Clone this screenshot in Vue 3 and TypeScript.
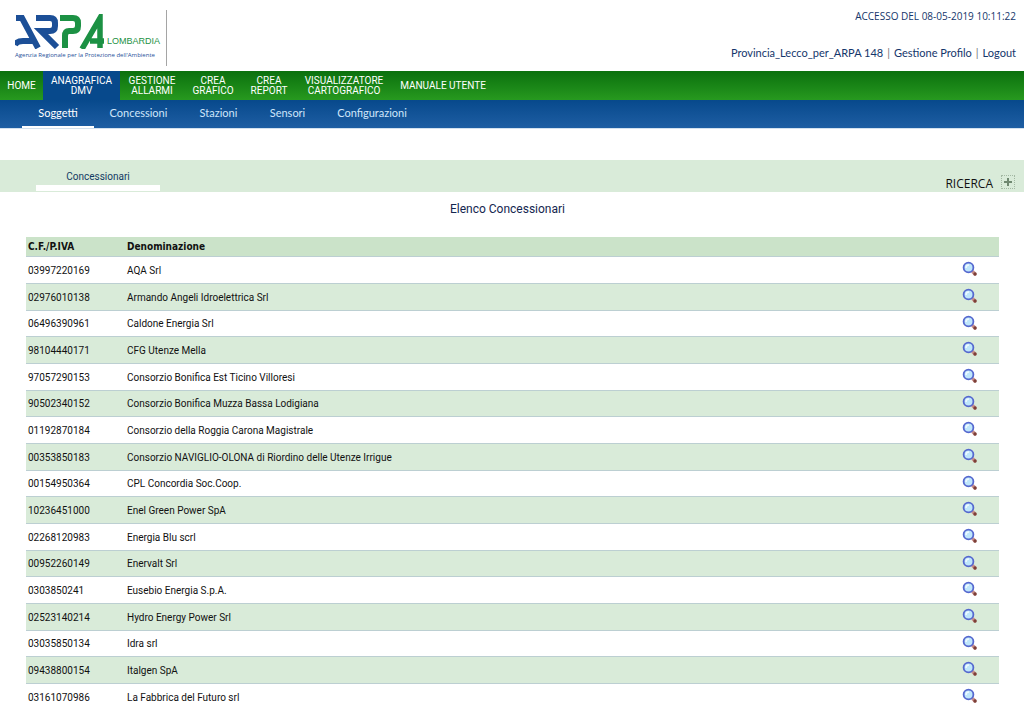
<script setup lang="ts">
interface Row {
  code: string
  name: string
}

const mainMenu: string[][] = [
  ['HOME'],
  ['ANAGRAFICA', 'DMV'],
  ['GESTIONE', 'ALLARMI'],
  ['CREA', 'GRAFICO'],
  ['CREA', 'REPORT'],
  ['VISUALIZZATORE', 'CARTOGRAFICO'],
  ['MANUALE UTENTE'],
]

const subMenu: string[] = ['Soggetti', 'Concessioni', 'Stazioni', 'Sensori', 'Configurazioni']

const rows: Row[] = [
  { code: '03997220169', name: 'AQA Srl' },
  { code: '02976010138', name: 'Armando Angeli Idroelettrica Srl' },
  { code: '06496390961', name: 'Caldone Energia Srl' },
  { code: '98104440171', name: 'CFG Utenze Mella' },
  { code: '97057290153', name: 'Consorzio Bonifica Est Ticino Villoresi' },
  { code: '90502340152', name: 'Consorzio Bonifica Muzza Bassa Lodigiana' },
  { code: '01192870184', name: 'Consorzio della Roggia Carona Magistrale' },
  { code: '00353850183', name: 'Consorzio NAVIGLIO-OLONA di Riordino delle Utenze Irrigue' },
  { code: '00154950364', name: 'CPL Concordia Soc.Coop.' },
  { code: '10236451000', name: 'Enel Green Power SpA' },
  { code: '02268120983', name: 'Energia Blu scrl' },
  { code: '00952260149', name: 'Enervalt Srl' },
  { code: '0303850241', name: 'Eusebio Energia S.p.A.' },
  { code: '02523140214', name: 'Hydro Energy Power Srl' },
  { code: '03035850134', name: 'Idra srl' },
  { code: '09438800154', name: 'Italgen SpA' },
  { code: '03161070986', name: 'La Fabbrica del Futuro srl' },
]
</script>

<template>
  <div class="page">
    <header class="header">
      <a class="brand" href="#" aria-label="ARPA Lombardia">
        <span class="brand-row">
          <svg class="mark" width="90" height="35" viewBox="0 0 90 35" aria-hidden="true">
            <g fill="none" stroke-width="6" stroke-linejoin="miter">
              <path stroke="#1c4f97" d="M1 4H7L23 34M0 31Q2 27 8 27H19" />
              <path stroke="#1c4f97" d="M21 4H35Q40 4 40 9V12Q40 17 35 17H26L42 33" />
              <path stroke="#1c9144" d="M50 34V22Q50 17 54 17H58Q63 17 63 12V9Q63 4 58 4H45" />
              <path stroke="#1c9144" stroke-width="5.500" d="M67 35L85 4V34M75 27H89" />
            </g>
          </svg>
          <span class="region">LOMBARDIA</span>
        </span>
        <span class="tagline">Agenzia Regionale per la Protezione dell'Ambiente</span>
      </a>
      <div class="session">
        <span class="access">ACCESSO DEL 08-05-2019 10:11:22</span>
        <div class="user">
          <span>Provincia_Lecco_per_ARPA 148</span><i>|</i><a href="#">Gestione Profilo</a><i>|</i><a href="#">Logout</a>
        </div>
      </div>
    </header>

    <nav class="main-nav" aria-label="Menu principale">
      <a v-for="(item, i) in mainMenu" :key="i" href="#" :class="{ active: i === 1 }">
        <span v-for="line in item" :key="line">{{ line }}</span>
      </a>
    </nav>
    <nav class="sub-nav" aria-label="Anagrafica">
      <a v-for="(item, i) in subMenu" :key="item" href="#" :class="{ active: i === 0 }">{{ item }}</a>
    </nav>

    <section class="band">
      <a class="tab" href="#">Concessionari</a>
      <div class="search">
        <label for="expand">RICERCA</label>
        <button id="expand" type="button" aria-label="Apri ricerca">
          <svg width="8" height="8" viewBox="0 0 8 8" aria-hidden="true"><path d="M0 4H8M4 0V8" stroke="#6f8870" stroke-width="2" /></svg>
        </button>
      </div>
    </section>

    <main>
      <h1>Elenco Concessionari</h1>
      <table>
        <colgroup><col class="c-code" /><col /><col class="c-action" /></colgroup>
        <thead>
          <tr><th scope="col">C.F./P.IVA</th><th scope="col">Denominazione</th><td></td></tr>
        </thead>
        <tbody>
          <tr v-for="row in rows" :key="row.code">
            <td>{{ row.code }}</td>
            <td>{{ row.name }}</td>
            <td>
              <button class="view" type="button" :aria-label="'Dettaglio ' + row.name">
                <svg width="16" height="16" viewBox="0 0 16 16" aria-hidden="true">
                  <path d="M9.500 9.500L11 11" stroke="#8a86b8" stroke-width="2" />
                  <path d="M11 11L13 13" stroke="#c98f8c" stroke-width="3.400" stroke-linecap="round" />
                  <circle cx="13" cy="13" r="1.700" fill="#7c4038" />
                  <circle cx="6.500" cy="6.500" r="4.900" fill="#bfe6fb" stroke="#5568cf" stroke-width="1.800" />
                  <path d="M4 7Q4 4 7 4" fill="none" stroke="#effaff" stroke-width="1.500" />
                </svg>
              </button>
            </td>
          </tr>
        </tbody>
      </table>
    </main>
  </div>
</template>

<style>
body {
  margin: 0;
  background: #fff;
}
</style>

<style scoped>
.page {
  font-family: Roboto, 'Noto Sans', sans-serif;
  font-size: 10px;
  color: #111;
}
a {
  color: inherit;
  text-decoration: none;
}
button {
  padding: 0;
  border: 0;
  background: none;
  cursor: pointer;
}
svg {
  display: block;
}
.header {
  display: flex;
  justify-content: space-between;
  height: 71px;
}
.brand {
  box-sizing: border-box;
  width: 167px;
  height: 56px;
  margin-top: 10px;
  padding: 4px 0 0 15px;
  border-right: 1px solid #a5a5a5;
  font-family: 'Liberation Sans', sans-serif;
}
.brand-row {
  display: flex;
  align-items: flex-end;
  gap: 2px;
}
.region {
  padding-bottom: 3px;
  color: #1c9144;
  font-size: 9px;
  line-height: 10px;
}
.tagline {
  display: block;
  padding-top: 2px;
  font-family: 'Open Sans', sans-serif;
  font-size: 6px;
  line-height: 8px;
  color: #1f529a;
  white-space: nowrap;
}
.session {
  display: flex;
  flex-direction: column;
  align-items: flex-end;
  gap: 21px;
  padding: 8px 8px 0 0;
  font-family: Lato, sans-serif;
  font-size: 11px;
  line-height: 16px;
  color: #14366b;
}
.access {
  font-family: 'Open Sans', sans-serif;
  font-size: 10px;
}
.user i {
  margin: 0 4px;
  font-style: normal;
  color: #777;
}
.main-nav {
  display: grid;
  grid-template-columns: 43px 77px 64px 58px 54px 96px 102px;
  height: 29px;
  background: linear-gradient(#0b700e, #27991f);
  font-size: 10px;
  line-height: 10px;
  color: #fff;
}
.main-nav a {
  display: flex;
  flex-direction: column;
  align-items: center;
  justify-content: center;
  white-space: nowrap;
}
.main-nav .active {
  background: #07498c;
}
.sub-nav {
  display: grid;
  grid-template-columns: 72px 89px 71px 67px 102px;
  height: 28px;
  padding-left: 22px;
  background: linear-gradient(#07498c, #1e5ea3);
  border-bottom: 1px solid #d3e1ee;
  font-family: Lato, sans-serif;
  font-size: 11px;
  line-height: 26px;
  color: #cfe6fa;
  text-align: center;
}
.sub-nav a {
  border-bottom: 2px solid transparent;
}
.sub-nav .active {
  color: #fff;
  border-bottom-color: #fff;
}
.band {
  display: flex;
  justify-content: space-between;
  height: 32px;
  margin-top: 31px;
  background: #d9ebd9;
}
.tab {
  box-sizing: border-box;
  width: 124px;
  height: 31px;
  margin-left: 36px;
  padding-top: 9px;
  border-bottom: 6px solid #fff;
  line-height: 16px;
  text-align: center;
  color: #123a63;
}
.search {
  display: flex;
  align-items: center;
  gap: 8px;
  height: 16px;
  margin: 16px 9px 0 0;
  font-family: 'Open Sans', sans-serif;
  font-size: 12px;
  line-height: 16px;
}
.search button {
  display: grid;
  place-items: center;
  width: 14px;
  height: 14px;
  margin-bottom: 4px;
  border: 1px dotted #a3b8a3;
}
main {
  padding: 0 25px 0 26px;
}
h1 {
  margin: 9px 0 20px;
  padding-right: 10px;
  font-size: 12px;
  line-height: 16px;
  font-weight: 400;
  text-align: center;
  color: #14264f;
}
table {
  width: 100%;
  border-collapse: separate;
  border-spacing: 0;
  table-layout: fixed;
}
.c-code {
  width: 99px;
}
.c-action {
  width: 39px;
}
th,
td {
  box-sizing: border-box;
  padding: 0 0 0 2px;
  text-align: left;
  vertical-align: middle;
  border-bottom: 1px solid #bccfd2;
}
th {
  font-family: 'DejaVu Sans Condensed', 'Noto Sans', sans-serif;
}
thead tr {
  height: 20px;
  background: #cbe3c9;
}
tbody tr {
  height: 27px;
}
tbody tr:nth-child(3n) {
  height: 26px;
}
tbody tr:nth-child(even) {
  background: #d9ebd9;
}
.view {
  display: block;
  padding-bottom: 2px;
}
</style>
